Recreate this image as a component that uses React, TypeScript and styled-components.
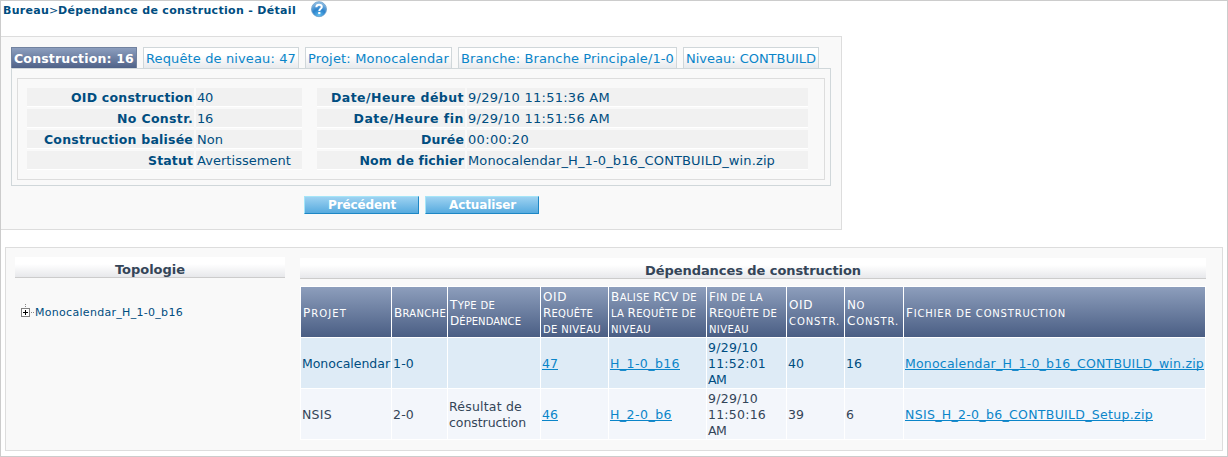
import React, { useLayoutEffect, useRef, useState } from 'react';
import styled, { createGlobalStyle } from 'styled-components';

const GlobalStyle = createGlobalStyle`
  * { box-sizing: border-box; }
  body {
    margin: 0;
    background: #fff;
    font-family: Verdana, 'DejaVu Sans', sans-serif;
    font-size: 12px;
    line-height: 16px;
    color: #004d80;
  }
`;

const Page = styled.div`
  width: 1228px;
  height: 457px;
  border: 1px solid #ccc;
  overflow: hidden;
`;

const TitleBar = styled.header`
  display: flex;
  height: 35px;
  padding: 2px 0 0 2px;
  font-size: 11px;
  svg { margin: -2px 0 0 15px; }
`;

const Strong = styled.strong`font-weight: bold;`;

const FittedSpan = styled.span`
  display: inline-block;
  height: 16px;
  vertical-align: top;
  white-space: pre;
`;

/* Spaces the letters of a run evenly so that it takes the given width. */
function Fit({ w, children }: { w: number; children: React.ReactNode }) {
  const ref = useRef<HTMLSpanElement>(null);
  const [spacing, setSpacing] = useState(0);
  useLayoutEffect(() => {
    const span = ref.current!;
    const count = span.textContent!.length;
    const current = parseFloat(span.style.letterSpacing) || 0;
    const natural = span.getBoundingClientRect().width - current * count;
    setSpacing((w - natural) / count);
  }, [w]);
  return <FittedSpan ref={ref} style={{ letterSpacing: spacing }}>{children}</FittedSpan>;
}

const DetailPanel = styled.section`
  width: 841px;
  height: 194px;
  padding: 10px 10px 0;
  background: #f9f9f9;
  border: solid #ddd;
  border-width: 1px 1px 1px 0;
`;

const Tabs = styled.nav`
  display: flex;
  gap: 6px;
`;

const Tab = styled.a<{ $active?: boolean; $w: number }>`
  width: ${p => p.$w}px;
  height: 21px;
  padding: 3px 0 0 2px;
  border: 1px solid ${p => (p.$active ? '#71829f' : '#d0d7da')};
  border-bottom: 0;
  color: ${p => (p.$active ? '#fff' : '#0a85c9')};
  font-size: ${p => (p.$active ? '12.5px' : '13px')};
  font-weight: ${p => (p.$active ? 'bold' : 'normal')};
  background: ${p => (p.$active
    ? 'linear-gradient(#8c9ebe, #4f6288)'
    : 'linear-gradient(#fff 35%, #e8eaed)')};
`;

const TabBody = styled.div`
  width: 820px;
  height: 118px;
  padding: 9px 5px 5px;
  border: 1px solid #d0d7da;
`;

const DetailBox = styled.div`
  display: flex;
  gap: 15px;
  height: 102px;
  padding: 9px;
  border: 1px solid #ddd;
`;

const DetailGrid = styled.dl<{ $label: number; $value: number }>`
  display: grid;
  grid-template-columns: ${p => p.$label}px ${p => p.$value}px;
  grid-auto-rows: 19px;
  gap: 2px;
  margin: 0;
`;

const Label = styled.dt`
  padding: 2px 1px 0 0;
  background: #f1f1f1;
  border-bottom: 1px solid #fff;
  text-align: right;
  font-size: 12.5px;
  font-weight: bold;
`;

const Value = styled.dd`
  margin: 0;
  padding: 2px 0 0 1px;
  background: #f1f1f1;
  border-bottom: 1px solid #fff;
  font-size: 13px;
`;

const Actions = styled.div`
  display: flex;
  gap: 6px;
  padding: 10px 0 0 293px;
`;

const Button = styled.button<{ $w: number }>`
  width: ${p => p.$w}px;
  height: 18px;
  padding: 1px 0 0 1px;
  border: 1px solid;
  border-color: #a5e5f8 #1d87c5 #1d87c5 #a5e5f8;
  background: linear-gradient(#9dd2f1, #57abdf);
  color: #fff;
  font: bold 12px/15px 'DejaVu Sans', sans-serif;
`;

const DependencyPanel = styled.section`
  display: flex;
  gap: 15px;
  width: 1218px;
  height: 204px;
  margin: 17px 0 0 4px;
  padding: 9px;
  background: #f9f9f9;
  border: 1px solid #ddd;
`;

const TreeColumn = styled.div`width: 270px;`;
const TableColumn = styled.div`
  width: 906px;
  padding-top: 1px;
`;

const Heading = styled.h2`
  height: 21px;
  margin: 0;
  padding-top: 4px;
  border-bottom: 1px solid #ccc;
  background: linear-gradient(#fff 35%, #e7e8eb);
  color: #344558;
  font-size: 13px;
  line-height: 17px;
  text-align: center;
`;

const TreeNode = styled.div`
  display: flex;
  margin-top: 26px;
  padding-left: 6px;
  font-size: 11px;
  line-height: 18px;
  svg { margin-right: 1px; }
`;

const Table = styled.table`
  width: 906px;
  margin-top: 7px;
  table-layout: fixed;
  border-spacing: 1px;
  background: #fff;
  td, th {
    height: 50px;
    padding: 2px 0 0 1px;
    vertical-align: middle;
    text-align: left;
    white-space: nowrap;
  }
`;

const HeadCell = styled.th`
  && { padding-left: 2px; }
  background: linear-gradient(#8d9ebc, #4a5e84);
  color: #fff;
  font-weight: normal;
`;

const Capital = styled.span`font-size: 12px;`;
const SmallCapital = styled.span`
  font-size: 10px;
  text-transform: uppercase;
`;

/* Small capitals at 10px beside 12px capitals. */
const SmallCaps = ({ text }: { text: string }) => (
  <>
    {text.match(/[A-Z]+|[^A-Z]+/g)!.map((part, i) => (/[A-Z]/.test(part)
      ? <Capital key={i}>{part}</Capital>
      : <SmallCapital key={i}>{part}</SmallCapital>))}
  </>
);

const Row = styled.tr<{ $selected?: boolean }>`
  background: ${p => (p.$selected ? '#deebf6' : '#f3f6fb')};
  color: ${p => (p.$selected ? '#004d80' : '#344558')};
  font-size: 12.5px;
`;

const Line = styled.div`height: 16px;`;

const Link = styled.a`
  display: block;
  height: 16px;
  color: #0a85c9;
  span {
    text-decoration: underline 1px;
    text-underline-offset: 1px;
    text-decoration-skip-ink: none;
  }
`;

type Run = [string, number];
type Cell = { lines: Run[]; link?: boolean };
const t = (...lines: Run[]): Cell => ({ lines });
const l = (...lines: Run[]): Cell => ({ lines, link: true });

const columns = [90, 55, 92, 67, 97, 79, 57, 58, 301];

const headers: Run[][] = [
  [['Projet', 44]],
  [['Branche', 52]],
  [['Type de', 45], ['Dépendance', 71]],
  [['OID', 24], ['Requête', 50], ['de niveau', 58]],
  [['Balise RCV de', 86], ['la Requête de', 85], ['niveau', 40]],
  [['Fin de la', 54], ['Requête de', 68], ['niveau', 40]],
  [['OID', 24], ['constr.', 51]],
  [['No', 18], ['Constr.', 52]],
  [['Fichier de construction', 160]],
];

const rows: Cell[][] = [
  [
    t(['Monocalendar', 88]), t(['1-0', 21]), t(), l(['47', 16]), l(['H_1-0_b16', 70]),
    t(['9/29/10', 50], ['11:52:01', 58], ['AM', 18]), t(['40', 16]), t(['16', 16]),
    l(['Monocalendar_H_1-0_b16_CONTBUILD_win.zip', 299]),
  ],
  [
    t(['NSIS', 30]), t(['2-0', 21]), t(['Résultat de', 73], ['construction', 77]), l(['46', 16]),
    l(['H_2-0_b6', 62]), t(['9/29/10', 50], ['11:50:16', 58], ['AM', 18]), t(['39', 16]),
    t(['6', 8]), l(['NSIS_H_2-0_b6_CONTBUILD_Setup.zip', 248]),
  ],
];

const leftDetails: [Run, Run][] = [
  [['OID construction', 122], ['40', 16]],
  [['No Constr.', 76], ['16', 16]],
  [['Construction balisée', 149], ['Non', 26]],
  [['Statut', 45], ['Avertissement', 94]],
];

const rightDetails: [Run, Run][] = [
  [['Date/Heure début', 133], ['9/29/10 11:51:36 AM', 142]],
  [['Date/Heure fin', 110], ['9/29/10 11:51:56 AM', 142]],
  [['Durée', 43], ['00:00:20', 61]],
  [['Nom de fichier', 104], ['Monocalendar_H_1-0_b16_CONTBUILD_win.zip', 307]],
];

const tabs: { text: string; w: number; tw: number }[] = [
  { text: 'Construction: 16', w: 126, tw: 120 },
  { text: 'Requête de niveau: 47', w: 156, tw: 150 },
  { text: 'Projet: Monocalendar', w: 147, tw: 141 },
  { text: 'Branche: Branche Principale/1-0', w: 219, tw: 213 },
  { text: 'Niveau: CONTBUILD', w: 136, tw: 130 },
];

const HelpIcon = () => (
  <svg width="16" height="17" viewBox="0 0 16 17">
    <defs>
      <radialGradient id="ball" cx="0.5" cy="0.95" r="0.9">
        <stop offset="0" stopColor="#5fc0f2" />
        <stop offset="0.5" stopColor="#2d83cc" />
        <stop offset="1" stopColor="#8fbfe6" />
      </radialGradient>
    </defs>
    <circle cx="8" cy="8.2" r="7.5" fill="url(#ball)" stroke="#6a9cc8" strokeWidth="0.8" />
    <path d="M5.3 6.2C5.4 4.4 6.5 3.7 8 3.7c1.700 0 2.800.9 2.800 2.300C10.800 7.800 8.300 7.900 8.300 10" fill="none" stroke="#fff" strokeWidth="2" />
    <rect x="7.2" y="11" width="2.2" height="2.1" fill="#fff" />
  </svg>
);

const ExpandIcon = () => (
  <svg width="13" height="14" viewBox="0 0 13 14" shapeRendering="crispEdges">
    <path d="M4 0h1v1H4zM4 2h1v1H4zM10 8h1v1h-1zM12 8h1v1h-1z" fill="#888" />
    <rect x="0.5" y="4.5" width="8" height="8" fill="#fff" stroke="#808080" />
    <path d="M2 8h5v1H2zM4 6h1v5H4z" fill="#000" />
  </svg>
);

const Details = ({ items, label, value }: { items: [Run, Run][]; label: number; value: number }) => (
  <DetailGrid $label={label} $value={value}>
    {items.map(([name, val]) => (
      <React.Fragment key={name[0]}>
        <Label><Fit w={name[1]}>{name[0]}</Fit></Label>
        <Value><Fit w={val[1]}>{val[0]}</Fit></Value>
      </React.Fragment>
    ))}
  </DetailGrid>
);

export default function App() {
  return (
    <>
      <GlobalStyle />
      <Page>
        <TitleBar>
          <Strong><Fit w={46}>Bureau</Fit></Strong>
          <Fit w={9}>&gt;</Fit>
          <Strong><Fit w={238}>Dépendance de construction - Détail</Fit></Strong>
          <HelpIcon />
        </TitleBar>
        <DetailPanel>
          <Tabs>
            {tabs.map((tab, i) => (
              <Tab key={tab.text} $active={i === 0} $w={tab.w}>
                <Fit w={tab.tw}>{tab.text}</Fit>
              </Tab>
            ))}
          </Tabs>
          <TabBody>
            <DetailBox>
              <Details items={leftDetails} label={167} value={106} />
              <Details items={rightDetails} label={148} value={341} />
            </DetailBox>
          </TabBody>
          <Actions>
            <Button $w={115}><Fit w={68}>Précédent</Fit></Button>
            <Button $w={114}><Fit w={67}>Actualiser</Fit></Button>
          </Actions>
        </DetailPanel>
        <DependencyPanel>
          <TreeColumn>
            <Heading><Fit w={70}>Topologie</Fit></Heading>
            <TreeNode>
              <ExpandIcon />
              <Fit w={148}>Monocalendar_H_1-0_b16</Fit>
            </TreeNode>
          </TreeColumn>
          <TableColumn>
            <Heading><Fit w={216}>Dépendances de construction</Fit></Heading>
            <Table>
              <colgroup>
                {columns.map((w, i) => <col key={i} width={w} />)}
              </colgroup>
              <thead>
                <tr>
                  {headers.map((h, i) => (
                    <HeadCell key={i}>
                      {h.map(([s, w]) => <Line key={s}><Fit w={w}><SmallCaps text={s} /></Fit></Line>)}
                    </HeadCell>
                  ))}
                </tr>
              </thead>
              <tbody>
                {rows.map((row, r) => (
                  <Row key={r} $selected={r === 0}>
                    {row.map((cell, c) => (
                      <td key={c}>
                        {cell.lines.map(([s, w]) => (cell.link
                          ? <Link key={s}><Fit w={w}>{s}</Fit></Link>
                          : <Line key={s}><Fit w={w}>{s}</Fit></Line>))}
                      </td>
                    ))}
                  </Row>
                ))}
              </tbody>
            </Table>
          </TableColumn>
        </DependencyPanel>
      </Page>
    </>
  );
}
